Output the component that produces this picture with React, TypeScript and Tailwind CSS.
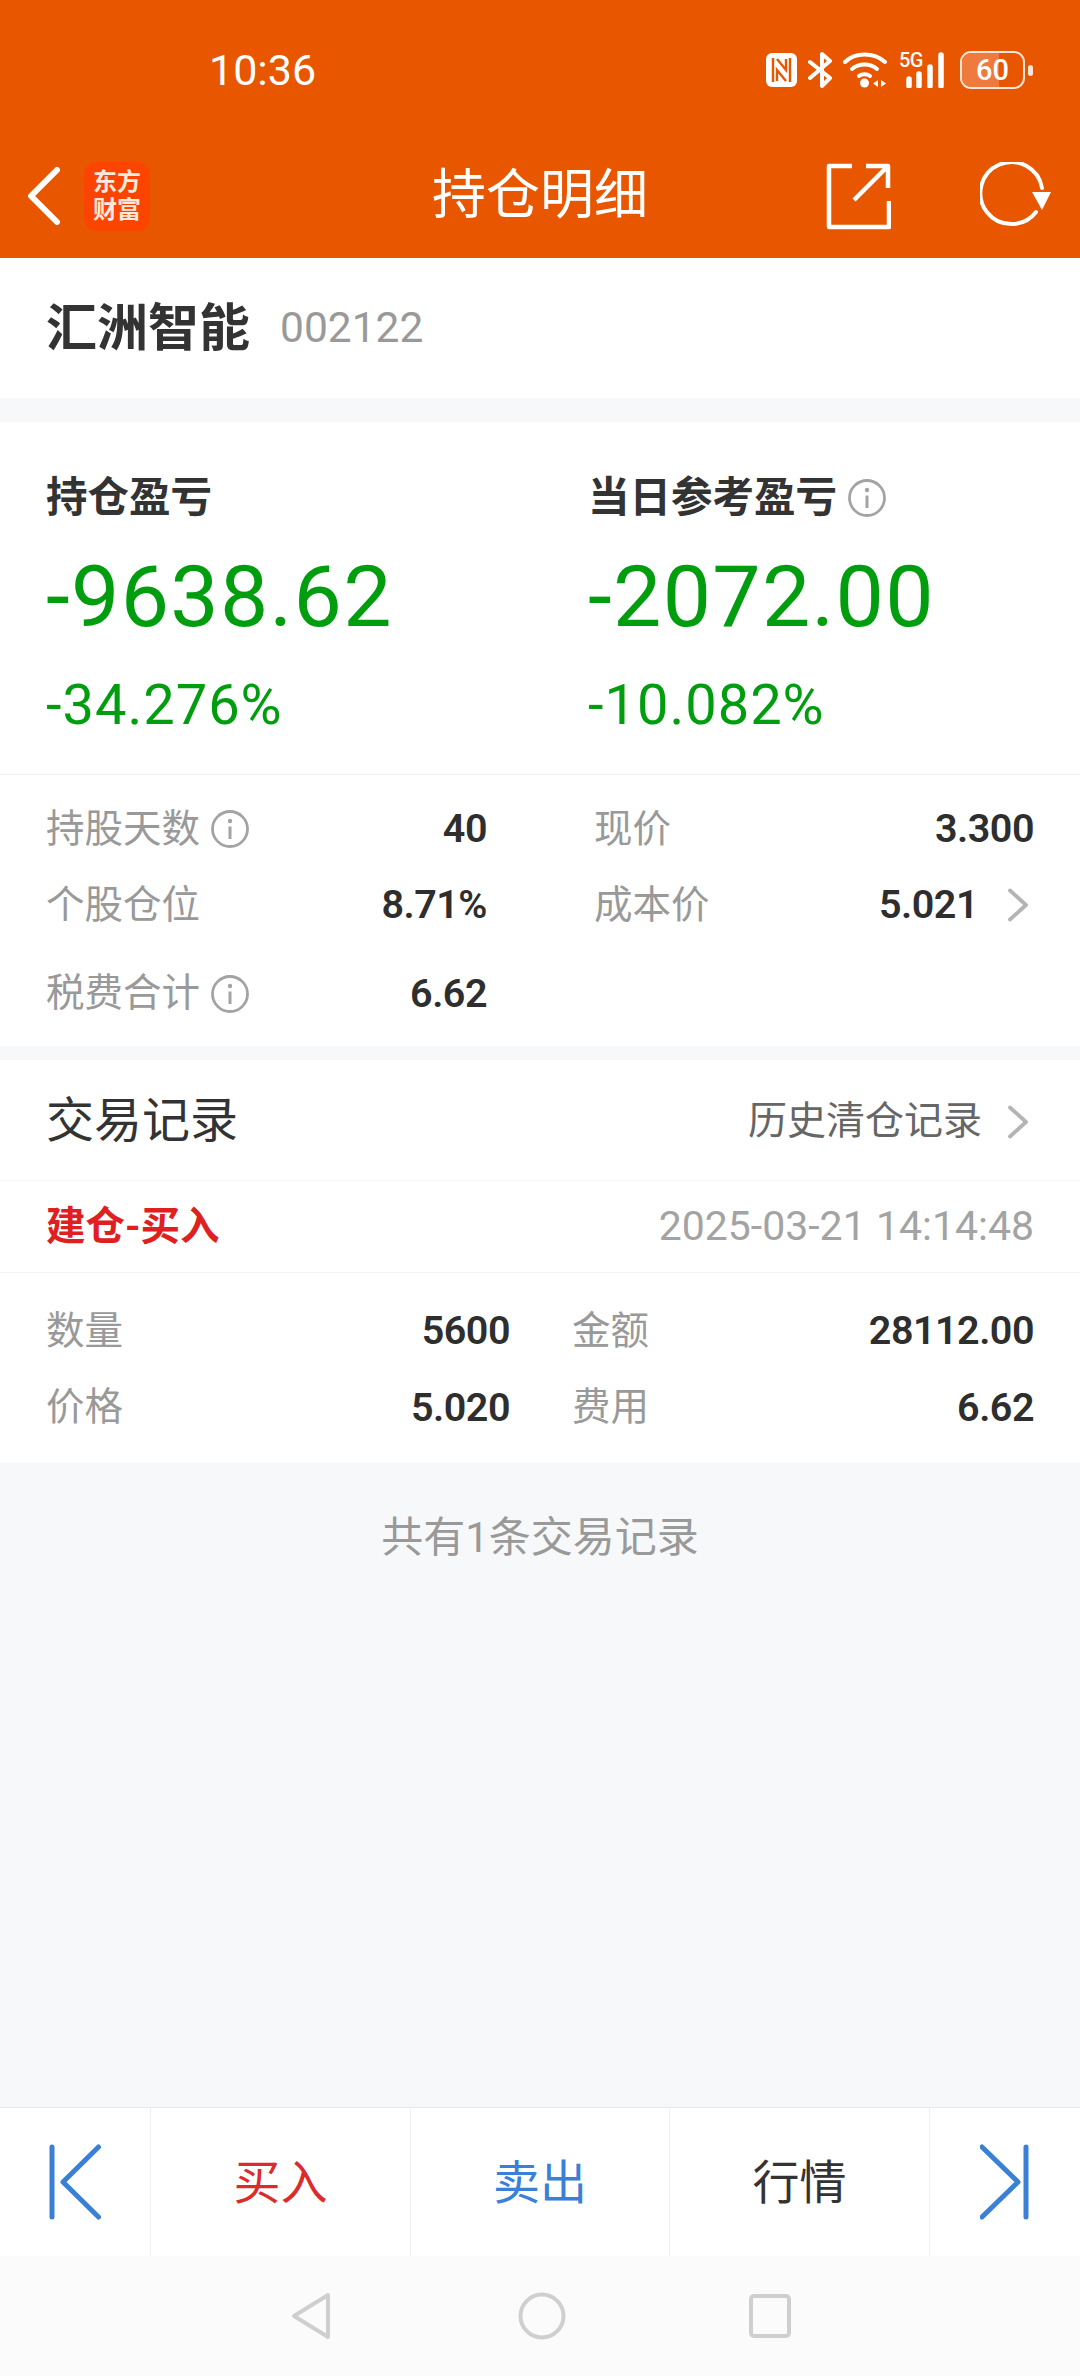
import React from "react";

const FONT = "font-['Roboto','Noto_Sans_CJK_SC',sans-serif]";

function Info() {
  return (
    <svg width="40" height="40" viewBox="0 0 40 40" fill="none" className="shrink-0">
      <circle cx="20" cy="20" r="17.5" stroke="#a3a3a3" strokeWidth="2.8" />
      <circle cx="20" cy="12" r="2.200" fill="#a3a3a3" />
      <path d="M20 17.500V30" stroke="#a3a3a3" strokeWidth="3" />
    </svg>
  );
}

function Chevron() {
  return (
    <svg width="20" height="34" viewBox="0 0 20 34" fill="none" className="shrink-0">
      <path d="M2 2.500 18 17 2 31.500" stroke="#b4b4b4" strokeWidth="3.800" strokeLinecap="round" strokeLinejoin="round" />
    </svg>
  );
}

function Kv({ label, value, info, chevron }: { label: string; value: string; info?: boolean; chevron?: boolean }) {
  return (
    <div className="flex items-center h-full">
      <span className="text-[38.500px] leading-none text-[#999999]">{label}</span>
      {info && <span className="ml-[10px] flex"><Info /></span>}
      <span className="ml-auto text-[39.500px] tracking-[-0.5px] leading-none font-semibold text-[#2e2e2e]">{value}</span>
      {chevron && <span className="ml-[30px] mr-[6px] flex"><Chevron /></span>}
    </div>
  );
}

function StatusIcons() {
  return (
    <div className="flex items-center h-[40px]">
      <svg width="31" height="34" viewBox="0 0 31 34" fill="none">
        <rect x="0" y="0" width="31" height="34" rx="6" fill="#fff" />
        <path d="M7 5v24M24 5v24" stroke="#e85600" strokeWidth="2.400" />
        <path d="M11 6 20 17V6M11 28V17l9 11" stroke="#e85600" strokeWidth="2.400" fill="none" />
      </svg>
      <svg width="26" height="36" viewBox="0 0 26 36" fill="none" className="ml-[11px]">
        <path d="M2 10 22 26l-8 8V2l8 7L2 26" stroke="#fff" strokeWidth="4" strokeLinejoin="round" strokeLinecap="round" />
      </svg>
      <svg width="45" height="36" viewBox="0 0 45 36" fill="none" className="ml-[9px]">
        <path d="M2 10C12 0 31 0 42 10" stroke="#fff" strokeWidth="4" strokeLinecap="round" />
        <path d="M9 17c7-6 18-6 25 0" stroke="#fff" strokeWidth="4" strokeLinecap="round" />
        <path d="M16 24c3-2.500 8-2.500 11 0" stroke="#fff" strokeWidth="4" strokeLinecap="round" />
        <circle cx="21.500" cy="31" r="4.500" fill="#fff" />
        <path d="M35 28v7l-5-3.500zM38 28v7l5-3.500z" fill="#fff" />
      </svg>
      <div className="ml-[11px] relative w-[50px] h-[36px]">
        <span className="absolute left-0 top-[-2px] text-[20px] leading-[20px] font-medium text-white font-['Roboto'] tracking-[-0.5px]">5G</span>
        <svg width="50" height="36" viewBox="0 0 50 36" fill="none" className="absolute inset-0">
          <path d="M10 27v7M20 22v12M31 15v19M42 3v31" stroke="#fff" strokeWidth="5.500" strokeLinecap="round" />
        </svg>
      </div>
      <div className="ml-[11px] relative w-[65px] h-[38px] rounded-[11px] border-[2.5px] border-[#fbe6d8] overflow-hidden">
        <div className="h-full w-[60%] bg-[#ee7a3d]" />
        <span className="absolute inset-0 flex items-center justify-center text-[29px] leading-none font-medium text-white font-['Roboto']">60</span>
      </div>
      <div className="ml-[3px] w-[5px] h-[11px] rounded-full bg-[#fbe6d8]" />
    </div>
  );
}

export default function App() {
  return (
    <div className={`${FONT} w-[1080px] h-[2376px] flex flex-col bg-[#f7f8fa] overflow-hidden`}>
      <header className="h-[258px] shrink-0 bg-[#e85600] text-white flex flex-col">
        <div className="h-[134px] pt-[6px] pl-[209px] pr-[47px] flex items-center justify-between">
          <span className="text-[43px] leading-none font-normal">10:36</span>
          <StatusIcons />
        </div>
        <div className="h-[124px] grid grid-cols-[1fr_auto_1fr] items-center">
          <div className="flex items-center pl-[27px]">
            <svg width="34" height="58" viewBox="0 0 34 58" fill="none">
              <path d="M30 3 4 29l26 26" stroke="#fff" strokeWidth="6" strokeLinecap="round" strokeLinejoin="round" />
            </svg>
            <div className="ml-[23px] w-[66px] h-[69px] rounded-[13px] bg-[#fb4400] flex flex-col items-center justify-center text-[24px] leading-[28px] font-bold text-[#ffe9dc]">
              <span>东方</span>
              <span>财富</span>
            </div>
          </div>
          <h1 className="text-[54px] leading-none font-normal">持仓明细</h1>
          <div className="flex items-center justify-end pr-[26px]">
            <svg width="65" height="67" viewBox="0 0 65 67" fill="none">
              <path d="M26 3H3v61h60V38M62 25V3H40M62 3 28 37" stroke="#fff" strokeWidth="4.500" strokeLinejoin="round" />
            </svg>
            <svg width="74" height="68" viewBox="0 0 74 68" fill="none" className="ml-[89px]">
              <path d="M56 50A31 31 0 1 1 62 26" stroke="#fff" strokeWidth="4" strokeLinecap="round" />
              <path d="M52 30h19l-9 18z" fill="#fff" />
            </svg>
          </div>
        </div>
      </header>

      <div className="h-[140px] shrink-0 bg-white flex items-center pl-[46px]">
        <span className="text-[51px] leading-none font-bold text-[#333333]">汇洲智能</span>
        <span className="ml-[30px] text-[42.500px] leading-none text-[#999999]">002122</span>
      </div>

      <section className="mt-[24px] h-[624px] shrink-0 bg-white flex flex-col">
        <div className="h-[353px] grid grid-cols-[542px_1fr] pl-[46px] border-b border-[#f4f4f4]">
          <Summary label="持仓盈亏" value="-9638.62" pct="-34.276%" />
          <Summary label="当日参考盈亏" value="-2072.00" pct="-10.082%" info />
        </div>
        <div className="pt-[16px] px-[46px] grid grid-cols-[441px_440px] gap-x-[107px] grid-rows-[76px_76px_101px]">
          <Kv label="持股天数" value="40" info />
          <Kv label="现价" value="3.300" />
          <Kv label="个股仓位" value="8.71%" />
          <Kv label="成本价" value="5.021" chevron />
          <Kv label="税费合计" value="6.62" info />
        </div>
      </section>

      <section className="mt-[14px] h-[403px] shrink-0 bg-white flex flex-col">
        <div className="h-[121px] shrink-0 border-b border-[#f4f4f4] flex items-center pl-[46px] pr-[52px]">
          <span className="pt-[2px] text-[48px] leading-none text-[#333333]">交易记录</span>
          <span className="pt-[3px] ml-auto text-[39px] leading-none text-[#666666]">历史清仓记录</span>
          <span className="pt-[3px] ml-[26px] flex"><Chevron /></span>
        </div>
        <div className="h-[92px] shrink-0 border-b border-[#f4f4f4] flex items-center justify-between px-[46px]">
          <span className="text-[39.500px] leading-none font-bold text-[#e02020]">建仓-买入</span>
          <span className="text-[41px] leading-none text-[#a3a3a3]">2025-03-21 14:14:48</span>
        </div>
        <div className="pt-[20px] px-[46px] grid grid-cols-[464px_462px] gap-x-[62px] grid-rows-[76px_77px]">
          <Kv label="数量" value="5600" />
          <Kv label="金额" value="28112.00" />
          <Kv label="价格" value="5.020" />
          <Kv label="费用" value="6.62" />
        </div>
      </section>

      <div className="flex-1 pt-[53px] flex justify-center">
        <span className="text-[42px] leading-[44px] text-[#999999]">共有1条交易记录</span>
      </div>

      <nav className="h-[149px] shrink-0 bg-white border-t border-[#e8e8e8] grid grid-cols-[150px_260px_259px_260px_1fr]">
        <div className="flex items-center pl-[48px]">
          <svg width="56" height="76" viewBox="0 0 56 76" fill="none">
            <path d="M4 3v70M50.500 3 15 38l35.500 35" stroke="#3a80d6" strokeWidth="5" strokeLinecap="round" strokeLinejoin="round" />
          </svg>
        </div>
        <BarButton color="text-[#dd2a2a]">买入</BarButton>
        <BarButton color="text-[#3a80d6]">卖出</BarButton>
        <BarButton color="text-[#333333]">行情</BarButton>
        <div className="flex items-center pl-[50px] border-l border-[#f0f0f0]">
          <svg width="56" height="76" viewBox="0 0 56 76" fill="none">
            <path d="M46 3v70M2 3l36 35L2 73" stroke="#3a80d6" strokeWidth="5" strokeLinecap="round" strokeLinejoin="round" />
          </svg>
        </div>
      </nav>

      <div className="h-[120px] shrink-0 bg-[#fbfbfb] flex items-center justify-center">
        <svg width="42" height="48" viewBox="0 0 42 48" fill="none" className="mr-[186px]">
          <path d="M38 3 4 24l34 21z" stroke="#cfcfcf" strokeWidth="4" strokeLinejoin="round" />
        </svg>
        <svg width="48" height="48" viewBox="0 0 48 48" fill="none" className="mr-[183px]">
          <circle cx="24" cy="24" r="21.500" stroke="#cfcfcf" strokeWidth="4" />
        </svg>
        <svg width="42" height="44" viewBox="0 0 42 44" fill="none">
          <rect x="2" y="2" width="38" height="40" rx="3" stroke="#cfcfcf" strokeWidth="4" />
        </svg>
      </div>
    </div>
  );
}

function Summary({ label, value, pct, info }: { label: string; value: string; pct: string; info?: boolean }) {
  return (
    <div className="flex flex-col">
      <div className="mt-[46px] h-[60px] flex items-center">
        <span className="text-[41.500px] leading-none font-bold text-[#333333]">{label}</span>
        {info && <span className="ml-[10px] flex"><Info /></span>}
      </div>
      <div className="mt-[19px] h-[100px] flex items-center text-[86px] tracking-[1.3px] leading-none text-[#009e0f]">{value}</div>
      <div className="mt-[23px] h-[70px] flex items-center text-[56px] tracking-[1px] leading-none text-[#009e0f]">{pct}</div>
    </div>
  );
}

function BarButton({ color, children }: { color: string; children: React.ReactNode }) {
  return (
    <div className={`flex items-center justify-center border-l border-[#f0f0f0] text-[47px] leading-none ${color}`}>
      {children}
    </div>
  );
}
